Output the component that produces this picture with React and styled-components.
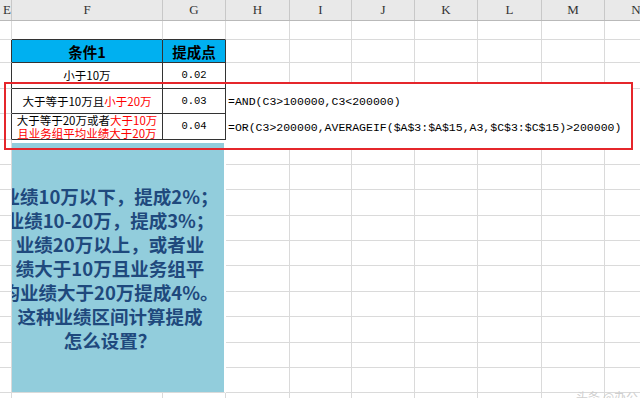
import styled, { createGlobalStyle } from "styled-components";

const GlobalStyle = createGlobalStyle`
    body {
        margin: 0;
        background: #fff;
        overflow: hidden;
        font-family: "Noto Sans CJK SC", "Liberation Sans", sans-serif;
    }
`;

const COLS = [12, 151, 63, 64, 62, 63, 63, 64, 63, 63];
const ROWS = [19, 23, 26, 25, 26, 25, 25, 26, 25, 25, 26, 25, 26, 25, 25, 30];
const LETTERS = ["E", "F", "G", "H", "I", "J", "K", "L", "M", "N"];
const GRID = "#dadada";
const DARK = "#333";

const Sheet = styled.div`
    position: relative;
    width: 640px;
    height: 398px;
    overflow: hidden;
`;

const HeaderBar = styled.div`
    display: grid;
    grid-template-columns: ${COLS.map((w) => w + "px").join(" ")};
    height: 21px;
    background: #e9e9e9;
    border-bottom: 1px solid #b9b9b9;
    box-sizing: border-box;
`;

const ColName = styled.div`
    display: flex;
    align-items: center;
    justify-content: ${(p) => (p.$edge ? "flex-end" : "center")};
    border-right: 1px solid #c8c8c8;
    font-family: "Liberation Serif", serif;
    font-size: 13px;
    color: #333;
    overflow: hidden;
`;

const Grid = styled.div`
    display: grid;
    grid-template-columns: ${COLS.map((w) => w + "px").join(" ")};
    grid-template-rows: ${ROWS.map((h) => h + "px").join(" ")};
`;

const place = (p) => `
    grid-row: ${p.$r} / span ${p.$rs || 1};
    grid-column: ${p.$c} / span ${p.$cs || 1};
`;

const Cell = styled.div`
    ${place}
    box-sizing: border-box;
    border-right: 1px solid ${(p) => p.$right || GRID};
    border-bottom: 1px solid ${(p) => p.$bottom || GRID};
`;

const TableHead = styled.div`
    ${place}
    box-sizing: border-box;
    display: flex;
    align-items: center;
    justify-content: center;
    background: #00b0f0;
    border-right: 1px solid ${DARK};
    border-bottom: 1px solid ${DARK};
    font-size: 14.5px;
    font-weight: bold;
    color: #000;
`;

const TableCell = styled.div`
    ${place}
    box-sizing: border-box;
    display: flex;
    flex-direction: column;
    align-items: center;
    justify-content: center;
    overflow: hidden;
    background: #fff;
    border-right: 1px solid ${DARK};
    border-bottom: 1px solid ${DARK};
    font-family: ${(p) => (p.$num ? '"Liberation Mono", monospace' : '"Noto Sans CJK SC", sans-serif')};
    font-size: ${(p) => (p.$num ? "10.5px" : "11.5px")};
    line-height: 13px;
    color: #000;
    white-space: nowrap;
`;

const Red = styled.span`
    color: #ff0000;
`;

const Formula = styled.div`
    ${place}
    position: relative;
    z-index: 2;
    display: flex;
    align-items: center;
    padding-left: 2px;
    font-family: "Liberation Mono", monospace;
    font-size: 11.5px;
    color: #000;
    white-space: nowrap;
`;

const Note = styled.div`
    ${place}
    box-sizing: border-box;
    display: flex;
    flex-direction: column;
    align-items: center;
    justify-content: center;
    padding-right: 16px;
    overflow: hidden;
    background: #92cddc;
    border-top: 3px solid #fff;
    border-right: 2px solid #fff;
    border-bottom: 1px solid ${GRID};
    font-size: 18.5px;
    font-weight: bold;
    line-height: 24px;
    color: #1f497d;
    white-space: nowrap;
`;

const Mark = styled.div`
    position: absolute;
    left: 4px;
    top: 82px;
    width: 629px;
    height: 68px;
    box-sizing: border-box;
    border: 2px solid #e5262b;
    background: linear-gradient(to right, transparent 220px, #fff 220px);
    z-index: 1;
`;

const Watermark = styled.div`
    position: absolute;
    right: 2px;
    bottom: -7px;
    font-size: 12px;
    color: #cfcfcf;
`;

const NOTE_LINES = [
    "业绩10万以下，提成2%；",
    "业绩10-20万，提成3%；",
    "业绩20万以上，或者业",
    "绩大于10万且业务组平",
    "均业绩大于20万提成4%。",
    "这种业绩区间计算提成",
    "怎么设置？",
];

const specials = [
    { r: 2, c: 2, node: (k) => <TableHead key={k} $r={2} $c={2}>条件1</TableHead> },
    { r: 2, c: 3, node: (k) => <TableHead key={k} $r={2} $c={3}>提成点</TableHead> },
    { r: 3, c: 2, node: (k) => <TableCell key={k} $r={3} $c={2}>小于10万</TableCell> },
    { r: 3, c: 3, node: (k) => <TableCell key={k} $r={3} $c={3} $num>0.02</TableCell> },
    {
        r: 4, c: 2,
        node: (k) => (
            <TableCell key={k} $r={4} $c={2}>
                <span>大于等于10万且<Red>小于20万</Red></span>
            </TableCell>
        ),
    },
    { r: 4, c: 3, node: (k) => <TableCell key={k} $r={4} $c={3} $num>0.03</TableCell> },
    {
        r: 5, c: 2,
        node: (k) => (
            <TableCell key={k} $r={5} $c={2}>
                <span>大于等于20万或者<Red>大于10万</Red></span>
                <Red>且业务组平均业绩大于20万</Red>
            </TableCell>
        ),
    },
    { r: 5, c: 3, node: (k) => <TableCell key={k} $r={5} $c={3} $num>0.04</TableCell> },
    {
        r: 4, c: 4, cs: 7,
        node: (k) => <Formula key={k} $r={4} $c={4} $cs={7}>=AND(C3&gt;100000,C3&lt;200000)</Formula>,
    },
    {
        r: 5, c: 4, cs: 7,
        node: (k) => (
            <Formula key={k} $r={5} $c={4} $cs={7}>
                =OR(C3&gt;200000,AVERAGEIF($A$3:$A$15,A3,$C$3:$C$15)&gt;200000)
            </Formula>
        ),
    },
    {
        r: 6, c: 2, rs: 10, cs: 2,
        node: (k) => (
            <Note key={k} $r={6} $c={2} $rs={10} $cs={2}>
                {NOTE_LINES.map((l) => <div key={l}>{l}</div>)}
            </Note>
        ),
    },
];

function buildCells() {
    const covered = new Set();
    const origin = {};
    specials.forEach((s) => {
        origin[s.r + ":" + s.c] = s;
        for (let r = s.r; r < s.r + (s.rs || 1); r++)
            for (let c = s.c; c < s.c + (s.cs || 1); c++) covered.add(r + ":" + c);
    });
    const out = [];
    for (let r = 1; r <= ROWS.length; r++) {
        for (let c = 1; c <= COLS.length; c++) {
            const key = r + ":" + c;
            if (origin[key]) out.push(origin[key].node(key));
            else if (!covered.has(key))
                out.push(
                    <Cell
                        key={key}
                        $r={r}
                        $c={c}
                        $right={c === 1 && r >= 2 && r <= 5 ? DARK : undefined}
                        $bottom={r === 1 && (c === 2 || c === 3) ? DARK : undefined}
                    />
                );
        }
    }
    return out;
}

export default function App() {
    return (
        <>
            <GlobalStyle />
            <Sheet>
                <HeaderBar>
                    {LETTERS.map((l, i) => (
                        <ColName key={l} $edge={i === 0}>{l}</ColName>
                    ))}
                </HeaderBar>
                <Grid>{buildCells()}</Grid>
                <Mark />
                <Watermark>头条 @办公</Watermark>
            </Sheet>
        </>
    );
}
